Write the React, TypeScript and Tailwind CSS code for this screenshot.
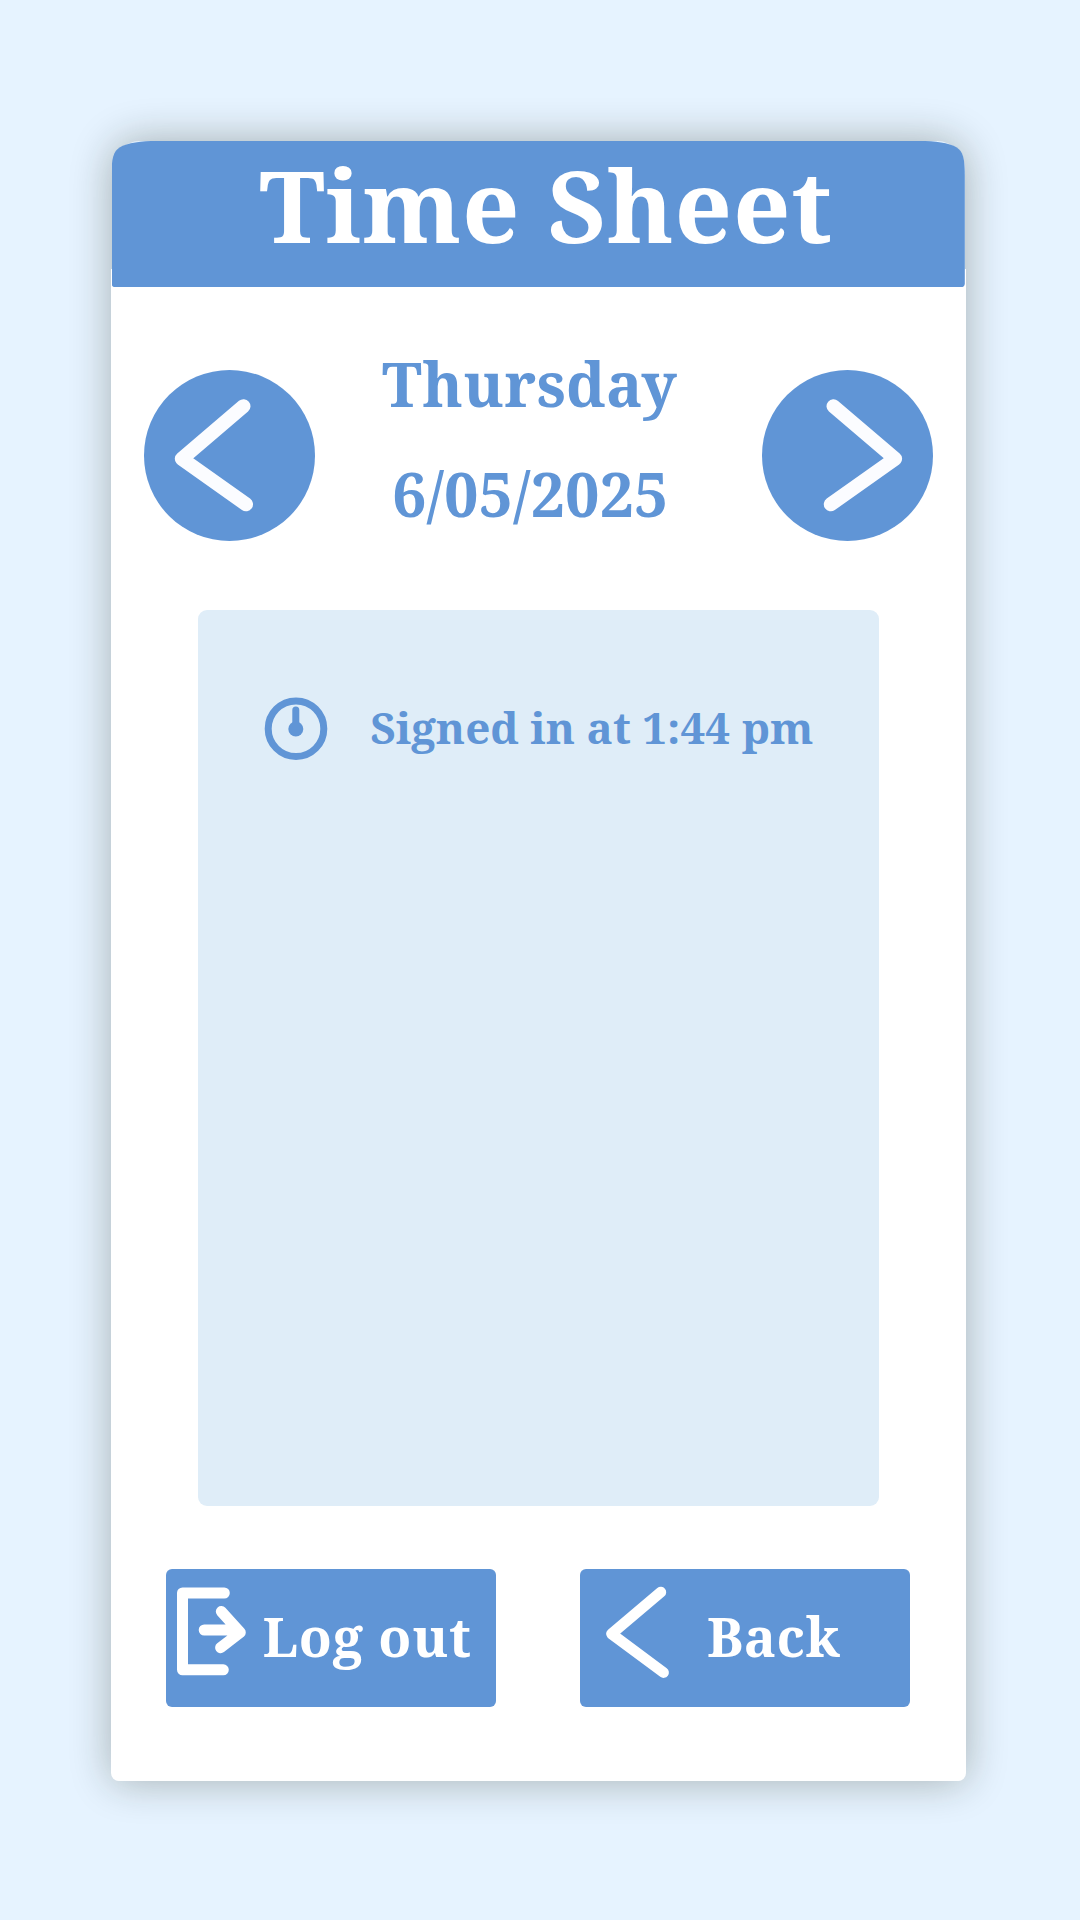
import React from "react";

function Chevron({ d, className, width }: { d: string; className: string; width: number }) {
  return (
    <svg className={className} fill="none" stroke="currentColor" strokeWidth={width} strokeLinecap="round" strokeLinejoin="round">
      <path d={d} />
    </svg>
  );
}

export default function App() {
  return (
    <div className="flex h-[1920px] w-[1080px] flex-col overflow-hidden bg-[#e6f3ff] pt-[141px] font-['Noto_Serif','DejaVu_Serif',serif] font-bold text-[#6095d6]">
      <main className="ml-[111.5px] flex h-[1639.5px] w-[853.3px] flex-col rounded-t-[28px] rounded-b-[8px] shadow-[0_0_42px_rgba(25,30,10,0.32)]">
        <header className="z-10 flex h-[146.3px] shrink-0 justify-center bg-[#6095d6] text-white [clip-path:path('M0,34C0,17_2,10.5_8,6.5C16,1.5_30,0_45,0L808.3,0C823.3,0_837.3,1.5_845.3,6.5C851.3,10.5_853.3,17_853.3,34L853.3,142.3Q853.3,146.3_849.3,146.3L4,146.3Q0,146.3_0,142.3Z')]">
          <h1 className="mt-[2.5px] ml-[16px] whitespace-nowrap text-[100.5px] leading-[120px] tracking-[0.9px]">Time Sheet</h1>
        </header>

        <div className="-mx-[1px] -mt-[18.8px] flex grow flex-col rounded-b-[8px] bg-white pt-[101px]">
          <section className="flex h-[172px] items-start justify-between pr-[33px] pl-[33px]">
            <button aria-label="Previous day" className="h-[171px] w-[171px] shrink-0 rounded-full bg-[#6095d6] text-[#fbfcff]">
              <Chevron className="h-full w-full" width={14} d="M99.5 36.2L37.8 88.8L102 134.3" />
            </button>
            <div className="-mt-[40.5px] mr-[17px] flex grow flex-col items-center text-[61px] leading-[110px]">
              <p className="whitespace-nowrap tracking-[0.3px]">Thursday</p>
              <p className="whitespace-nowrap pl-[1px]">6/05/2025</p>
            </div>
            <button aria-label="Next day" className="h-[171px] w-[171px] shrink-0 rounded-full bg-[#6095d6] text-[#fbfcff]">
              <Chevron className="h-full w-full" width={14} d="M71.5 36.2L133.1 88.8L68.8 134.3" />
            </button>
          </section>

          <section className="mx-[87px] mt-[68px] h-[896px] rounded-[9px] bg-[#dfedf8] pt-[87px] pl-[66.5px]">
            <div className="flex items-center">
              <svg className="h-[64px] w-[64px] shrink-0" fill="none" stroke="currentColor" strokeWidth="7">
                <circle cx="32" cy="31.7" r="27.8" />
                <path d="M31.8 13V32" strokeLinecap="round" />
                <circle cx="31.8" cy="32" r="7.5" fill="currentColor" stroke="none" />
              </svg>
              <p className="-mt-[4px] ml-[42.2px] whitespace-nowrap text-[44px] leading-[64px]">Signed in at 1:44 pm</p>
            </div>
          </section>

          <footer className="mt-[63.5px] flex gap-[84.3px] pl-[55px] text-[54px] leading-[135px] text-white">
            <button className="flex h-[138px] w-[330.3px] rounded-[6px] bg-[#6095d6]">
              <svg className="h-[138px] w-[97.3px] shrink-0" fill="none" stroke="currentColor" strokeWidth="11" strokeLinecap="round" strokeLinejoin="round">
                <path d="M58.3 24H16.5V100.8H57.3M38.2 61H68M55.3 42.5L74.3 63.5L54.6 78.7" />
              </svg>
              <span className="whitespace-nowrap tracking-[0.7px]">Log out</span>
            </button>
            <button className="flex h-[138px] w-[330.3px] rounded-[6px] bg-[#6095d6]">
              <Chevron className="h-[138px] w-[127px] shrink-0" width={10.8} d="M80.8 23.2L31.5 64.8L83.5 103.5" />
              <span className="whitespace-nowrap tracking-[0.4px]">Back</span>
            </button>
          </footer>
        </div>
      </main>
    </div>
  );
}
